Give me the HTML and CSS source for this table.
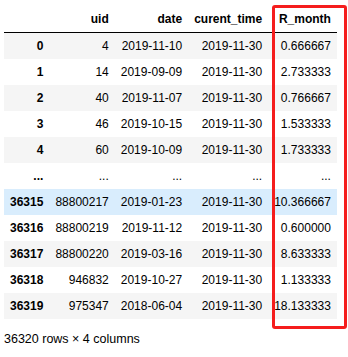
FILE: index.html
```html
<!DOCTYPE html>
<html>
<head>
<meta charset="utf-8">
<link rel="stylesheet" href="styles.css">
</head>
<body>
<div class="output">
  <table class="dataframe">
    <thead>
      <tr><th></th><th>uid</th><th>date</th><th>curent_time</th><th>R_month</th></tr>
    </thead>
    <tbody>
      <tr><th>0</th><td>4</td><td>2019-11-10</td><td>2019-11-30</td><td>0.666667</td></tr>
      <tr><th>1</th><td>14</td><td>2019-09-09</td><td>2019-11-30</td><td>2.733333</td></tr>
      <tr><th>2</th><td>40</td><td>2019-11-07</td><td>2019-11-30</td><td>0.766667</td></tr>
      <tr><th>3</th><td>46</td><td>2019-10-15</td><td>2019-11-30</td><td>1.533333</td></tr>
      <tr><th>4</th><td>60</td><td>2019-10-09</td><td>2019-11-30</td><td>1.733333</td></tr>
      <tr><th>...</th><td>...</td><td>...</td><td>...</td><td>...</td></tr>
      <tr class="hover"><th>36315</th><td>88800217</td><td>2019-01-23</td><td>2019-11-30</td><td>10.366667</td></tr>
      <tr><th>36316</th><td>88800219</td><td>2019-11-12</td><td>2019-11-30</td><td>0.600000</td></tr>
      <tr><th>36317</th><td>88800220</td><td>2019-03-16</td><td>2019-11-30</td><td>8.633333</td></tr>
      <tr><th>36318</th><td>946832</td><td>2019-10-27</td><td>2019-11-30</td><td>1.133333</td></tr>
      <tr><th>36319</th><td>975347</td><td>2018-06-04</td><td>2019-11-30</td><td>18.133333</td></tr>
    </tbody>
  </table>
  <p class="shape">36320 rows × 4 columns</p>
  <div class="highlight"></div>
</div>
</body>
</html>
```
FILE: styles.css
```css
html, body {
  margin: 0;
  padding: 0;
  background: #fff;
}
body {
  font-family: "Liberation Sans", Arial, Helvetica, sans-serif;
  color: #000;
}
.output {
  position: relative;
  padding: 6px 0 0 4px;
}
.dataframe {
  border-collapse: collapse;
  border-spacing: 0;
  font-size: 12px;
  line-height: 14px;
}
.dataframe th,
.dataframe td {
  text-align: right;
  vertical-align: middle;
  padding: 6px;
  white-space: nowrap;
}
.dataframe th {
  font-weight: bold;
}
.dataframe thead {
  border-bottom: 1px solid #000;
}
.dataframe tbody tr:nth-child(odd) {
  background: #f5f5f5;
}
.dataframe tbody tr.hover {
  background: #d9edfd;
}
.shape {
  margin: 13px 0 0 0;
  font-size: 12.5px;
  line-height: 14px;
}
.highlight {
  position: absolute;
  left: 272px;
  top: 5px;
  width: 69px;
  height: 318px;
  border: 3px solid #f51d1d;
  border-radius: 3px;
}
```
